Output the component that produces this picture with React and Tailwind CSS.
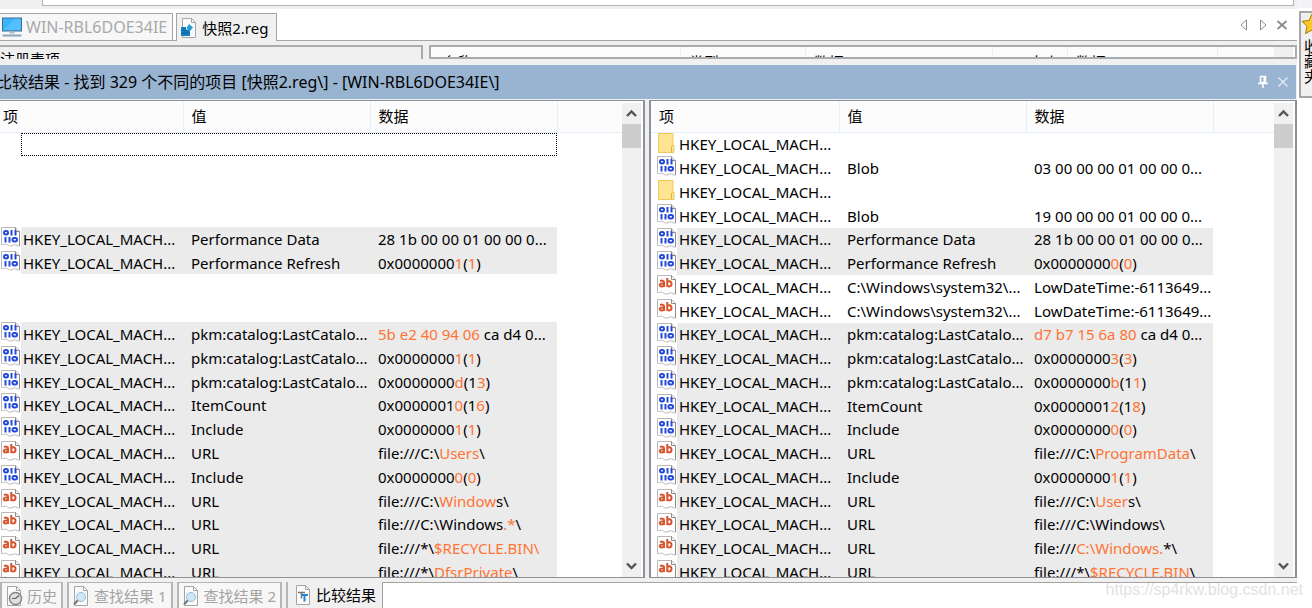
import React from 'react';

const FONT = "font-['Noto_Sans','Noto_Sans_CJK_SC',sans-serif]";

// "~text~" marks the part of a value that differs
const LEFT_ROWS = [
  { focus: true },
  null,
  null,
  null,
  { icon: 'bin', name: 'Performance Data', data: '28 1b 00 00 01 00 00 0...', diff: true },
  { icon: 'bin', name: 'Performance Refresh', data: '0x0000000~1~(~1~)', diff: true },
  null,
  null,
  { icon: 'bin', name: 'pkm:catalog:LastCatalo...', data: '~5b e2 40 94 06~ ca d4 0...', diff: true },
  { icon: 'bin', name: 'pkm:catalog:LastCatalo...', data: '0x0000000~1~(~1~)', diff: true },
  { icon: 'bin', name: 'pkm:catalog:LastCatalo...', data: '0x0000000~d~(1~3~)', diff: true },
  { icon: 'bin', name: 'ItemCount', data: '0x0000001~0~(1~6~)', diff: true },
  { icon: 'bin', name: 'Include', data: '0x0000000~1~(~1~)', diff: true },
  { icon: 'str', name: 'URL', data: 'file:///C:\\~Users~\\', diff: true },
  { icon: 'bin', name: 'Include', data: '0x0000000~0~(~0~)', diff: true },
  { icon: 'str', name: 'URL', data: 'file:///C:\\~Window~s\\', diff: true },
  { icon: 'str', name: 'URL', data: 'file:///C:\\Windows~.*~\\', diff: true },
  { icon: 'str', name: 'URL', data: 'file:///*\\~$RECYCLE.BIN\\~', diff: true },
  { icon: 'str', name: 'URL', data: 'file:///*\\~DfsrPrivate~\\', diff: true },
];

const RIGHT_ROWS = [
  { icon: 'folder', name: '', data: '' },
  { icon: 'bin', name: 'Blob', data: '03 00 00 00 01 00 00 0...' },
  { icon: 'folder', name: '', data: '' },
  { icon: 'bin', name: 'Blob', data: '19 00 00 00 01 00 00 0...' },
  { icon: 'bin', name: 'Performance Data', data: '28 1b 00 00 01 00 00 0...', diff: true },
  { icon: 'bin', name: 'Performance Refresh', data: '0x0000000~0~(~0~)', diff: true },
  { icon: 'str', name: 'C:\\Windows\\system32\\...', data: 'LowDateTime:-6113649...' },
  { icon: 'str', name: 'C:\\Windows\\system32\\...', data: 'LowDateTime:-6113649...' },
  { icon: 'bin', name: 'pkm:catalog:LastCatalo...', data: '~d7 b7 15 6a 80~ ca d4 0...', diff: true },
  { icon: 'bin', name: 'pkm:catalog:LastCatalo...', data: '0x0000000~3~(~3~)', diff: true },
  { icon: 'bin', name: 'pkm:catalog:LastCatalo...', data: '0x0000000~b~(1~1~)', diff: true },
  { icon: 'bin', name: 'ItemCount', data: '0x0000001~2~(1~8~)', diff: true },
  { icon: 'bin', name: 'Include', data: '0x0000000~0~(~0~)', diff: true },
  { icon: 'str', name: 'URL', data: 'file:///C:\\~ProgramData~\\', diff: true },
  { icon: 'bin', name: 'Include', data: '0x0000000~1~(~1~)', diff: true },
  { icon: 'str', name: 'URL', data: 'file:///C:\\~User~s\\', diff: true },
  { icon: 'str', name: 'URL', data: 'file:///C:\\Windows\\', diff: true },
  { icon: 'str', name: 'URL', data: 'file:///~C:\\Windows.~*\\', diff: true },
  { icon: 'str', name: 'URL', data: 'file:///*\\~$RECYCLE.BIN~\\', diff: true },
];

const ValueSheet = ({ children }) => (
  <svg width="21" height="20" viewBox="0 0 21 20" className="block">
    <path d="M1.500.5h14l4 4v14.500c-2 .8-3-1.500-5-1.200s-3 1.700-5 1.200-2-1.800-4-1.800-2.500.8-4 .3z" fill="#fff" stroke="#b8b8b8" />
    <path d="M15.500.5v4h4M19.500 4.500V19" fill="none" stroke="#8c8c8c" />
    {children}
  </svg>
);

const BinaryIcon = () => (
  <ValueSheet>
    <g fill="none" stroke="#2448d8" strokeWidth="2">
      <rect x="4" y="4" width="4" height="3.500" rx="1.700" />
      <path d="M11.500 3v5.500M15.500 3v5.500M5.500 10v5.500M9.500 10v5.500" />
      <rect x="12.500" y="11" width="4.500" height="3.500" rx="1.700" />
    </g>
  </ValueSheet>
);

const StringIcon = () => (
  <ValueSheet>
    <g fill="none" stroke="#d9532c" strokeWidth="2">
      <path d="M4 6.200c1.500-.9 4-.9 4 1v4.800M8 8.300c-2.500 0-4.200.4-4.200 1.800 0 1.900 3 1.700 4.200.2" />
      <path d="M11.300 3v9M11.300 7.300c.8-1.600 4.200-1.600 4.200 1.500s-3.400 3.300-4.200 1.400" />
    </g>
  </ValueSheet>
);

const FolderIcon = () => (
  <svg width="20" height="20" viewBox="0 0 20 20" className="block">
    <path d="M2.500.5h14.500v11l1 1v7h-15.500z" fill="#ffe593" stroke="#edc85a" />
    <path d="M15.500 19.500v-6l1.500-1.500" fill="none" stroke="#e0b33c" />
  </svg>
);

const ICONS = { bin: BinaryIcon, str: StringIcon, folder: FolderIcon };

const DiffText = ({ text }) =>
  text.split('~').map((part, i) => (
    <span key={i} className={i % 2 ? 'text-[#ff7433]' : ''}>{part}</span>
  ));

const Chevron = ({ down }) => (
  <svg width="11" height="9" viewBox="0 0 11 9">
    <path d={down ? 'M1 1.500l4.500 4.500L10 1.500' : 'M1 7l4.500-4.500L10 7'} fill="none" stroke="#555" strokeWidth="2.400" />
  </svg>
);

const ScrollBar = () => (
  <div className="mt-0.5 mr-0.5 flex w-[19px] shrink-0 flex-col bg-[#f0f0f0]">
    <button type="button" aria-label="向上滚动" className="flex h-[21px] items-center justify-center">
      <Chevron />
    </button>
    <div className="h-6 bg-[#cdcdcd]" />
    <button type="button" aria-label="向下滚动" className="mt-auto flex h-[21px] items-center justify-center">
      <Chevron down />
    </button>
  </div>
);

const ComparePane = ({ rows, inset }) => (
  <section className={`flex min-h-0 overflow-hidden border-y border-r-2 border-[#8b9099] bg-white ${inset ? 'border-l-2' : ''}`}>
    <div className="min-w-0 flex-1 overflow-hidden">
      <table className="h-[483px] w-full table-fixed border-collapse text-left whitespace-nowrap">
        <colgroup>
          <col className={inset ? 'w-[26px]' : 'w-[21px]'} />
          <col className="w-[162px]" />
          <col className="w-[187px]" />
          <col className="w-[187px]" />
          <col />
        </colgroup>
        <thead>
          <tr className="bg-[#fcfcfc]">
            <th colSpan={2} className={`h-[31px] border-r border-b border-[#e5f0fa] p-0 font-normal ${inset ? 'pl-2' : 'pl-[3px]'}`}>项</th>
            <th className="border-r border-b border-[#e5f0fa] p-0 pl-2 font-normal">值</th>
            <th className="border-r border-b border-[#e5f0fa] p-0 pl-2 font-normal">数据</th>
            <th className="border-b border-[#e5f0fa] p-0" />
          </tr>
        </thead>
        <tbody>
          {rows.map((row, i) => {
            if (!row) {
              return (
                <tr key={i}>
                  <td colSpan={5} className="p-0"><div className="h-5" /></td>
                </tr>
              );
            }
            if (row.focus) {
              return (
                <tr key={i}>
                  <td className="h-[23px] p-0" />
                  <td colSpan={3} className="p-0 align-top">
                    <div className="h-[23px] border border-dotted border-black" />
                  </td>
                  <td className="p-0" />
                </tr>
              );
            }
            const Icon = ICONS[row.icon];
            const bg = row.diff ? 'bg-[#ebebeb]' : '';
            return (
              <tr key={i}>
                <td className={`p-0 align-top ${inset ? 'pl-[5px]' : ''}`}><Icon /></td>
                <td className={`p-0 pl-0.5 ${bg}`}>HKEY_LOCAL_MACH...</td>
                <td className={`p-0 pl-2 ${bg}`}>{row.name}</td>
                <td className={`p-0 pl-2 ${bg}`}><DiffText text={row.data} /></td>
                <td className="p-0" />
              </tr>
            );
          })}
        </tbody>
      </table>
    </div>
    <ScrollBar />
  </section>
);

const ComputerIcon = () => (
  <svg width="22" height="20" viewBox="0 0 22 20" className="shrink-0">
    <rect x="2.500" y="1" width="19" height="13" fill="#3db2fb" stroke="#3a6f96" />
    <path d="M3.500 13L15 2h5.500v11z" fill="#55c0ff" />
    <path d="M9.500 14.500h5v2h-5z" fill="#a9bccb" />
    <path d="M2.500 18.500h19" stroke="#8fa5b5" strokeWidth="2" />
  </svg>
);

const Sheet = ({ children }) => (
  <svg width="18" height="20" viewBox="0 0 18 20" className="shrink-0">
    <path d="M2.500.5h9l4 4v15h-13z" fill="#fafafa" stroke="#a5a5a5" />
    <path d="M11.500.5v4h4" fill="none" stroke="#a5a5a5" />
    {children}
  </svg>
);

const RegFileIcon = () => (
  <Sheet>
    <path d="M1 9h5v3h4v6H1z" fill="#1487c8" />
    <path d="M1 12h9M1 15h9M4 9v9M7 12v6" stroke="#0b5c92" strokeWidth=".7" />
    <path d="M9 6l4 3.500-3.500 4L6.500 10z" fill="#2b9bd4" />
  </Sheet>
);

const HistoryIcon = () => (
  <Sheet>
    <circle cx="10.500" cy="12.500" r="6" fill="#dde1e4" stroke="#858585" strokeWidth="1.500" />
    <path d="M10.500 12.500l3.500-3M10.500 12.500H7" stroke="#606060" strokeWidth="1.200" />
  </Sheet>
);

const SearchIcon = () => (
  <Sheet>
    <path d="M6 14l-4 4.500" stroke="#777" strokeWidth="2" />
    <circle cx="9" cy="11" r="4.500" fill="#cbe8fa" stroke="#9dbdd0" />
  </Sheet>
);

const CompareIcon = () => (
  <Sheet>
    <path d="M4 7.500h7M7.500 7.500v6" stroke="#777" strokeWidth="1.500" />
    <path d="M7 10h7M10.500 10v6.500" stroke="#2485d0" strokeWidth="2" />
  </Sheet>
);

const PinIcon = () => (
  <svg width="12" height="14" viewBox="0 0 12 14" className="block">
    <path d="M3.500 1.500h5v6h-5zM1 8.500h10M6 8.500V13" fill="none" stroke="currentColor" strokeWidth="1.500" />
    <path d="M7.500 1v7" stroke="currentColor" strokeWidth="2" />
  </svg>
);

const BottomTab = ({ icon: Icon, label }) => (
  <button type="button" className="flex h-full items-center gap-1 border-x-2 border-t border-[#b5b5b5] bg-[#f7f7f7] pr-1 pl-[3px] text-[#a3a3a3]">
    <Icon />
    {label}
  </button>
);

const TabStrip = () => (
  <div className="flex h-8 shrink-0 items-end border-b border-[#a5a5a5] bg-white">
    <button type="button" className="flex h-[27px] items-center gap-1 border-t border-r border-[#a5a5a5] bg-[#f7f7f7] pr-[5px] text-base text-[#a9a9a9]">
      <ComputerIcon />
      WIN-RBL6DOE34IE
    </button>
    <button type="button" className="-mb-px ml-[3px] flex h-7 items-center gap-1 border-x border-t border-[#a5a5a5] bg-[#f0f0f0] pr-2 pl-[3px]">
      <RegFileIcon />
      快照2.reg
    </button>
    <div className="mr-[9px] ml-auto flex h-full items-center gap-2 text-[#8c8c8c]">
      <button type="button" aria-label="上一个">
        <svg width="12" height="14" viewBox="0 0 12 14" className="block"><path d="M10.500 2v10L5 7z" fill="none" stroke="currentColor" /></svg>
      </button>
      <button type="button" aria-label="下一个">
        <svg width="12" height="14" viewBox="0 0 12 14" className="block"><path d="M4.500 2v10L10 7z" fill="none" stroke="currentColor" /></svg>
      </button>
      <button type="button" aria-label="关闭">
        <svg width="12" height="12" viewBox="0 0 12 12" className="block"><path d="M1.500 2l9 8M10.500 2l-9 8" stroke="currentColor" strokeWidth="1.800" /></svg>
      </button>
    </div>
  </div>
);

// only the top edge of the panes behind the result window is visible
const ClippedPanes = () => (
  <div className="flex h-[18px] shrink-0 gap-1.5 pt-1">
    <div className="h-3.5 w-[423px] overflow-hidden border-t-2 border-r-2 border-[#a8abb0] pt-0.5 leading-5 whitespace-nowrap">
      注册表项
    </div>
    <div className="flex h-3.5 flex-1 overflow-hidden border-2 border-[#a8abb0] bg-[#fcfcfc] leading-[31px] whitespace-nowrap">
      <span className="w-[250px] border-r border-[#e5f0fa] pl-3">名称</span>
      <span className="w-[125px] border-r border-[#e5f0fa] pl-2">类型</span>
      <span className="w-[187px] border-r border-[#e5f0fa] pl-2">数据</span>
      <span className="w-[75px] border-r border-[#e5f0fa] pr-2 text-right">大小</span>
      <span className="w-[150px] border-r border-[#e5f0fa] pl-2">数据</span>
      <span className="mr-0.5 ml-auto w-[19px] bg-[#f0f0f0]" />
    </div>
  </div>
);

const App = () => (
  <div className={`relative flex h-screen overflow-hidden bg-white text-[15px] leading-5 text-black ${FONT}`}>
    <main className="flex min-w-0 flex-1 flex-col bg-[#f0f0f0]">
      <div className="h-[9px] shrink-0 pr-[3px] pl-[42px]">
        <div className="h-1.5 border-x border-b border-[#b4b4b8] bg-white" />
      </div>
      <TabStrip />
      <ClippedPanes />
      <header className="mt-1.5 mr-px flex h-[34px] shrink-0 items-center bg-[#99b4d1] pr-[7px]">
        <h1 className="-ml-1 flex-1 text-base leading-5 whitespace-nowrap">比较结果 - 找到 329 个不同的项目 [快照2.reg\] - [WIN-RBL6DOE34IE\]</h1>
        <button type="button" aria-label="固定" className="mr-2 text-white">
          <PinIcon />
        </button>
        <button type="button" aria-label="关闭" className="text-[#e8eef5]">
          <svg width="12" height="12" viewBox="0 0 12 12" className="block"><path d="M1.500 1.500l9 9M10.500 1.500l-9 9" stroke="currentColor" strokeWidth="1.200" /></svg>
        </button>
      </header>
      <div className="mt-px grid min-h-0 flex-1 grid-cols-[645fr_648fr] grid-rows-1 gap-1">
        <ComparePane rows={LEFT_ROWS} />
        <ComparePane rows={RIGHT_ROWS} inset />
      </div>
      <nav className="mt-1 flex h-[26px] shrink-0 gap-1 bg-[#f0f0f0]">
        <BottomTab icon={HistoryIcon} label="历史" />
        <BottomTab icon={SearchIcon} label="查找结果 1" />
        <BottomTab icon={SearchIcon} label="查找结果 2" />
        <div className="flex flex-1 border-l-2 border-[#b5b5b5]">
          <button type="button" className="flex items-center gap-1 pr-1.5 pl-1.5">
            <CompareIcon />
            比较结果
          </button>
          <div className="flex-1 border-t border-l border-[#a5a5a5] bg-white" />
        </div>
      </nav>
    </main>
    <aside className="w-[15px] shrink-0 overflow-hidden border-t-8 border-[#f3f3f5] pt-[3px] pl-0.5">
      <button type="button" aria-label="收藏夹" className="flex h-[87px] w-8 flex-col items-start border-2 border-[#a5a5a5] bg-[#f0f0f0]">
        <svg width="22" height="22" viewBox="0 0 22 22" className="shrink-0">
          <path d="M11 1l3 6.500 7 .8-5 5 1.200 7.200L11 17l-6.500 3.500L6 13.300l-5-5 7-.8z" fill="#fbc926" stroke="#a8780c" />
        </svg>
        <span className="pt-1 leading-5 [writing-mode:vertical-rl]">收藏夹</span>
      </button>
    </aside>
    <div className="pointer-events-none absolute right-[9px] bottom-2 font-['Liberation_Sans',sans-serif] text-base leading-5 text-[#e2e2e2]">
      https://sp4rkw.blog.csdn.net
    </div>
  </div>
);

export default App;
